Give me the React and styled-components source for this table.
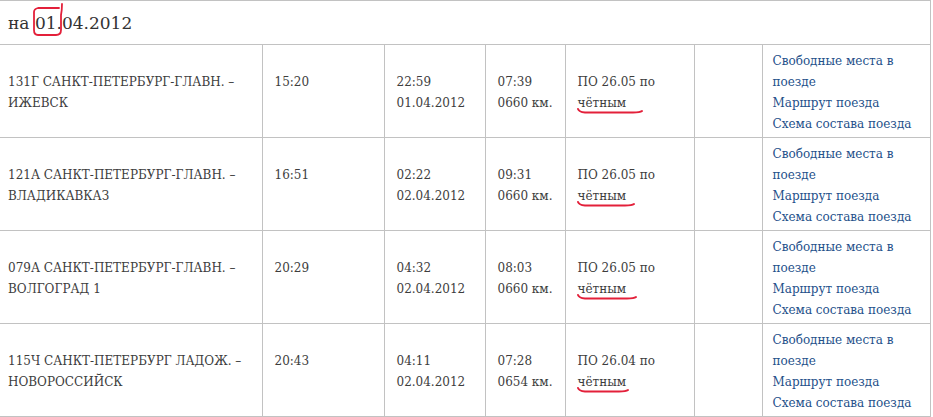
import React from "react";
import styled, { createGlobalStyle } from "styled-components";

const GlobalStyle = createGlobalStyle`
  body {
    margin: 0;
    background: #fff;
    font-family: "DejaVu Serif", "Liberation Serif", serif;
  }
`;

const Page = styled.div`
  width: 933px;
  height: 417px;
  overflow: hidden;
  background: #fff;
`;

const Schedule = styled.table`
  border-collapse: collapse;
  table-layout: fixed;
  width: 930px;
  color: #3d3d3d;
  font-size: 12px;
`;

const HeadCell = styled.th`
  height: 43px;
  padding: 0 8px;
  text-align: left;
  font-weight: normal;
  font-size: 17px;
  color: #333;
  border-top: 1px solid #c2c2c2;
  border-bottom: 1px solid #c2c2c2;
  border-right: 1px solid #c2c2c2;
`;

const Cell = styled.td`
  padding: 6px 8px 2px ${(p) => (p.$first ? "8px" : "12px")};
  vertical-align: middle;
  line-height: 21px;
  border: 1px solid #c2c2c2;
  border-left: ${(p) => (p.$first ? "none" : "1px solid #c2c2c2")};
  border-top: none;
  height: 84px;
`;

const LinkCell = styled(Cell)`
  padding-left: 10px;
`;

const Line = styled.div`
  white-space: nowrap;
`;

const TrainLink = styled.a`
  display: block;
  color: #24508a;
  text-decoration: none;
  white-space: nowrap;
`;

const Marked = styled.span`
  position: relative;
  display: inline-block;
`;

const Mark = styled.svg`
  position: absolute;
  pointer-events: none;
  overflow: visible;
`;

const Underline = styled(Mark)`
  left: -1px;
  bottom: 0;
  height: 6px;
`;

const Ring = styled(Mark)`
  left: -4px;
  top: -11px;
  width: 36px;
  height: 36px;
`;

const trains = [
  {
    name: ["131Г САНКТ-ПЕТЕРБУРГ-ГЛАВН. –", "ИЖЕВСК"],
    dep: "15:20",
    arr: ["22:59", "01.04.2012"],
    trip: ["07:39", "0660 км."],
    days: "ПО 26.05 по",
    mark: 66,
  },
  {
    name: ["121А САНКТ-ПЕТЕРБУРГ-ГЛАВН. –", "ВЛАДИКАВКАЗ"],
    dep: "16:51",
    arr: ["02:22", "02.04.2012"],
    trip: ["09:31", "0660 км."],
    days: "ПО 26.05 по",
    mark: 58,
  },
  {
    name: ["079А САНКТ-ПЕТЕРБУРГ-ГЛАВН. –", "ВОЛГОГРАД 1"],
    dep: "20:29",
    arr: ["04:32", "02.04.2012"],
    trip: ["08:03", "0660 км."],
    days: "ПО 26.05 по",
    mark: 60,
  },
  {
    name: ["115Ч САНКТ-ПЕТЕРБУРГ ЛАДОЖ. –", "НОВОРОССИЙСК"],
    dep: "20:43",
    arr: ["04:11", "02.04.2012"],
    trip: ["07:28", "0654 км."],
    days: "ПО 26.04 по",
    mark: 52,
  },
];

const RED = "#e3203a";

const Scribble = ({ width }) => (
  <Underline width={width} viewBox={`0 0 ${width} 6`}>
    <path
      d={`M1 1 Q2 4 8 4.5 L${width - 10} 4.5 Q${width - 3} 4.5 ${width - 1} 3`}
      fill="none"
      stroke={RED}
      strokeWidth="2"
      strokeLinecap="round"
    />
  </Underline>
);

const Lines = ({ items }) => items.map((t, i) => <Line key={i}>{t}</Line>);

export default function App() {
  return (
    <Page>
      <GlobalStyle />
      <Schedule>
        <colgroup>
          <col style={{ width: 262 }} />
          <col style={{ width: 122 }} />
          <col style={{ width: 101 }} />
          <col style={{ width: 80 }} />
          <col style={{ width: 129 }} />
          <col style={{ width: 68 }} />
          <col style={{ width: 168 }} />
        </colgroup>
        <thead>
          <tr>
            <HeadCell colSpan={7}>
              на{" "}
              <Marked>
                01
                <Ring viewBox="0 0 36 36">
                  <path
                    d="M31 2 Q31 8 30 13 L30 28 Q30 33 25 33 L7 33 Q3 33 3 28 L3 10 Q3 7 7 6 L28 6"
                    fill="none"
                    stroke={RED}
                    strokeWidth="1.8"
                    strokeLinecap="round"
                  />
                </Ring>
              </Marked>
              .04.2012
            </HeadCell>
          </tr>
        </thead>
        <tbody>
          {trains.map((t) => (
            <tr key={t.name[0]}>
              <Cell $first>
                <Lines items={t.name} />
              </Cell>
              <Cell>
                <Lines items={[t.dep, "\u00a0"]} />
              </Cell>
              <Cell>
                <Lines items={t.arr} />
              </Cell>
              <Cell>
                <Lines items={t.trip} />
              </Cell>
              <Cell>
                <Line>{t.days}</Line>
                <Line>
                  <Marked>
                    чётным
                    <Scribble width={t.mark} />
                  </Marked>
                </Line>
              </Cell>
              <Cell />
              <LinkCell>
                <TrainLink href="#">Свободные места в</TrainLink>
                <TrainLink href="#">поезде</TrainLink>
                <TrainLink href="#">Маршрут поезда</TrainLink>
                <TrainLink href="#">Схема состава поезда</TrainLink>
              </LinkCell>
            </tr>
          ))}
        </tbody>
      </Schedule>
    </Page>
  );
}
